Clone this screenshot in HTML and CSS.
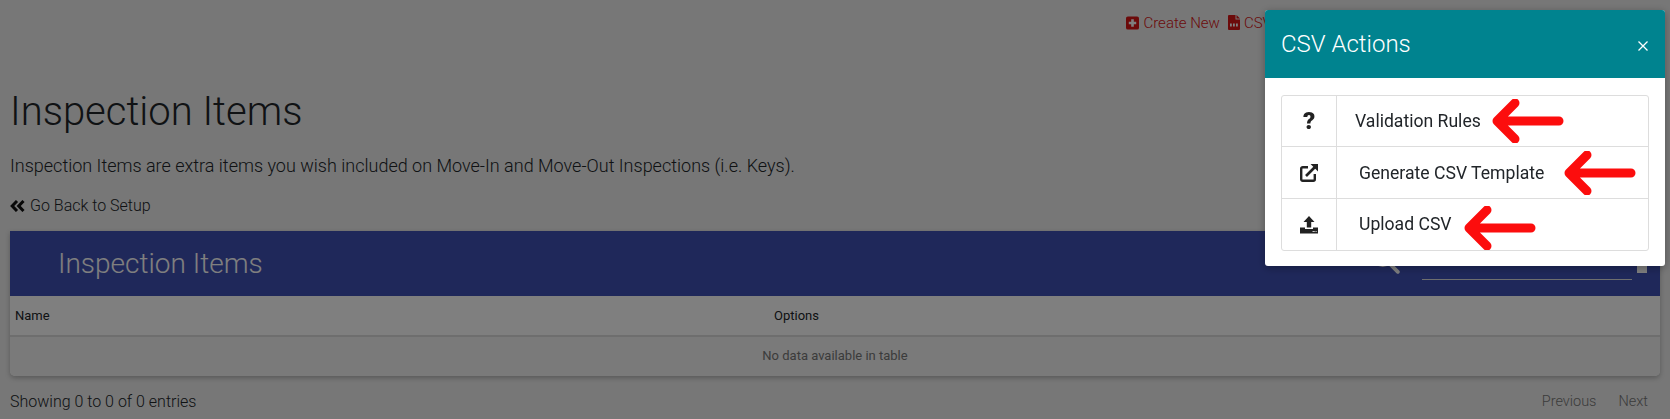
FILE: index.html
```html
<!DOCTYPE html>
<html lang="en">
<head>
    <meta charset="UTF-8">
    <title>Inspection Items</title>
    <link rel="stylesheet" href="styles.css">
</head>
<body>
    <div class="container">
        <div class="top-actions">
            <a class="action">
                <svg class="action-icon" viewBox="0 0 14 14"><path fill="#d81515" d="M2 0h10a2 2 0 0 1 2 2v10a2 2 0 0 1-2 2H2a2 2 0 0 1-2-2V2a2 2 0 0 1 2-2z"/><path fill="#fff" d="M5.600 3h2.800v2.600H11v2.800H8.400V11H5.600V8.400H3V5.600h2.600z"/></svg>
                Create New
            </a>
            <a class="action">
                <svg class="action-icon file" viewBox="0 0 12 15"><path fill="#d81515" d="M1 0h6.500v4.500H12V14a1 1 0 0 1-1 1H1a1 1 0 0 1-1-1V1a1 1 0 0 1 1-1z"/><path fill="#d81515" d="M8.500 0L12 3.500H8.500z"/><path fill="#fff" d="M2 8.500h1.800v3H2zM5 8.500h1.800v3H5zM8 8.500h1.800v3H8z"/></svg>
                CSV Actions
            </a>
        </div>

        <h1>Inspection Items</h1>
        <p class="intro">Inspection Items are extra items you wish included on Move-In and Move-Out Inspections (i.e. Keys).</p>
        <a class="back">
            <svg class="back-icon" viewBox="0 0 15 12"><path fill="none" stroke="#111" stroke-width="3" d="M7 1L2.200 6 7 11M13.500 1L8.700 6l4.800 5"/></svg>
            Go Back to Setup
        </a>

        <div class="card">
            <div class="card-header">
                <h2>Inspection Items</h2>
                <div class="search">
                    <svg class="search-icon" viewBox="0 0 26 26"><circle cx="10" cy="10" r="8" fill="none" stroke="#fff" stroke-width="3"/><path stroke="#fff" stroke-width="3.500" stroke-linecap="round" d="M16 16l8 8"/></svg>
                    <div class="search-line"></div>
                    <div class="search-end"></div>
                </div>
            </div>
            <div class="table-head">
                <div class="col-name">Name</div>
                <div>Options</div>
            </div>
            <div class="table-empty">No data available in table</div>
        </div>

        <div class="table-foot">
            <span>Showing 0 to 0 of 0 entries</span>
            <div class="pager"><span>Previous</span><span>Next</span></div>
        </div>
    </div>

    <div class="overlay"></div>

    <div class="modal">
        <div class="modal-header">
            <span class="modal-title">CSV Actions</span>
            <svg class="modal-close" viewBox="0 0 10 10"><path stroke="#fff" stroke-width="1.300" d="M.5.500l9 9M9.500.500l-9 9"/></svg>
        </div>
        <div class="modal-body">
            <div class="list">
                <div class="list-row">
                    <div class="list-icon"><span class="question">?</span></div>
                    <div class="list-text first">
                        Validation Rules
                        <svg class="arrow" viewBox="0 0 72 44"><path fill="none" stroke="#fc0d0d" stroke-width="9" stroke-linecap="round" stroke-linejoin="round" d="M67 22H5M23 4L5 22l18 18"/></svg>
                    </div>
                </div>
                <div class="list-row middle">
                    <div class="list-icon">
                        <svg class="icon" viewBox="0 0 18 18"><path fill="none" stroke="#222" stroke-width="2.400" d="M8 3.200H2.700a1.500 1.500 0 0 0-1.500 1.500v10.600a1.500 1.500 0 0 0 1.500 1.500h10.600a1.500 1.500 0 0 0 1.500-1.500V10"/><path fill="none" stroke="#222" stroke-width="2.600" d="M6 12L16 2"/><path fill="#222" d="M10.500 0H18v7.500z"/></svg>
                    </div>
                    <div class="list-text second">
                        Generate CSV Template
                        <svg class="arrow" viewBox="0 0 72 44"><path fill="none" stroke="#fc0d0d" stroke-width="9" stroke-linecap="round" stroke-linejoin="round" d="M67 22H5M23 4L5 22l18 18"/></svg>
                    </div>
                </div>
                <div class="list-row">
                    <div class="list-icon">
                        <svg class="icon" viewBox="0 0 18 18"><path fill="#222" d="M9 0l5.500 6h-3.300v5.500H6.800V6H3.500z"/><path fill="#222" d="M0 11.500h5V13h8v-1.500h5V17.500H0z"/><path fill="#fff" d="M12.500 15h2.300v.8h-2.300zM15.500 15h1.200v.8h-1.200z"/></svg>
                    </div>
                    <div class="list-text third">
                        Upload CSV
                        <svg class="arrow" viewBox="0 0 72 44"><path fill="none" stroke="#fc0d0d" stroke-width="9" stroke-linecap="round" stroke-linejoin="round" d="M67 22H5M23 4L5 22l18 18"/></svg>
                    </div>
                </div>
            </div>
        </div>
    </div>
</body>
</html>
```

FILE: styles.css
```css
* {
    box-sizing: border-box;
}

body {
    margin: 0;
    height: 419px;
    overflow: hidden;
    background: #eee;
    color: #212529;
    font-family: Roboto, "Liberation Sans", sans-serif;
    font-size: 16px;
    font-weight: 300;
}

.container {
    padding: 0 10px;
}

.top-actions {
    display: flex;
    justify-content: flex-end;
    gap: 8px;
    height: 88px;
    padding: 14px 335px 0 0;
    font-size: 15px;
    line-height: 18px;
}

.action {
    display: flex;
    align-items: flex-start;
    gap: 4px;
    color: #d81515;
    font-weight: 300;
}

.action-icon {
    width: 13px;
    height: 14px;
    margin-top: 2px;
}

.action-icon.file {
    width: 12px;
    height: 15px;
    margin-top: 1px;
}

h1 {
    margin: 0;
    font-size: 40px;
    font-weight: 300;
    line-height: 48px;
}

.intro {
    margin: 18px 0 0;
    font-size: 18px;
    line-height: 24px;
}

.back {
    display: flex;
    align-items: center;
    gap: 5px;
    margin-top: 16px;
    line-height: 24px;
}

.back-icon {
    width: 15px;
    height: 12px;
}

.card {
    margin-top: 13px;
    background: #fff;
    border-radius: 0 0 5px 5px;
    box-shadow: 0 2px 5px rgba(0,0,0,0.25);
}

.card-header {
    display: flex;
    justify-content: space-between;
    align-items: center;
    height: 65px;
    padding-left: 48px;
    background: #3f51b5;
    color: #fff;
}

h2 {
    margin: 0;
    font-size: 28px;
    font-weight: 300;
}

.search {
    display: flex;
    align-items: flex-end;
    padding-right: 13px;
    margin-bottom: 2px;
}

.search-icon {
    width: 28px;
    height: 28px;
    margin: 0 22px 6px 0;
}

.search-line {
    width: 210px;
    border-bottom: 1px solid #ddd;
}

.search-end {
    width: 10px;
    height: 14px;
    margin: 0 0 7px 5px;
    background: #fff;
}

.table-head {
    display: flex;
    align-items: center;
    height: 41px;
    padding-left: 5px;
    border-bottom: 2px solid #ddd;
    font-size: 13px;
    font-weight: 400;
}

.col-name {
    width: 759px;
}

.table-empty {
    height: 39px;
    line-height: 38px;
    text-align: center;
    font-size: 13px;
    font-weight: 400;
    color: #777;
    background: #f5f5f5;
    border-radius: 0 0 5px 5px;
}

.table-foot {
    display: flex;
    justify-content: space-between;
    padding: 14px 12px 0 0;
    line-height: 24px;
}

.pager {
    display: flex;
    gap: 22px;
    font-size: 14.500px;
    color: #777;
}

.overlay {
    position: fixed;
    inset: 0;
    background: rgba(0,0,0,0.5);
}

.modal {
    position: fixed;
    top: 10px;
    left: 1265px;
    width: 400px;
    height: 256px;
    background: #fff;
    border-radius: 3px;
    box-shadow: 0 2px 8px rgba(0,0,0,0.3);
}

.modal-header {
    display: flex;
    justify-content: space-between;
    align-items: center;
    height: 68px;
    padding: 0 17px 0 16px;
    background: #00838f;
    border-radius: 3px 3px 0 0;
    color: #fff;
}

.modal-title {
    font-size: 24px;
    font-weight: 300;
}

.modal-close {
    width: 10px;
    height: 10px;
    margin-top: 4px;
}

.modal-body {
    padding: 17px 16px;
}

.list {
    border: 1px solid #ddd;
    border-radius: 3px;
}

.list-row {
    display: flex;
    height: 51px;
    border-bottom: 1px solid #ddd;
}

.list-row.middle {
    height: 52px;
}

.list-row:last-child {
    border-bottom: 0;
}

.list-icon {
    display: flex;
    justify-content: center;
    align-items: center;
    width: 55px;
    border-right: 1px solid #ddd;
}

.question {
    font-size: 24px;
    font-weight: 900;
    color: #222;
}

.icon {
    width: 18px;
    height: 18px;
}

.list-text {
    display: flex;
    align-items: center;
    gap: 13px;
    padding-left: 22px;
    font-size: 17.600px;
    font-weight: 400;
    color: #212529;
}

.list-text.first {
    padding-left: 18px;
}

.list-text.second {
    gap: 22px;
}

.list-text.third {
    gap: 14px;
    padding-bottom: 2px;
}

.arrow {
    width: 72px;
    height: 44px;
    margin-left: -2px;
}

.third .arrow {
    margin-top: 8px;
}
```
